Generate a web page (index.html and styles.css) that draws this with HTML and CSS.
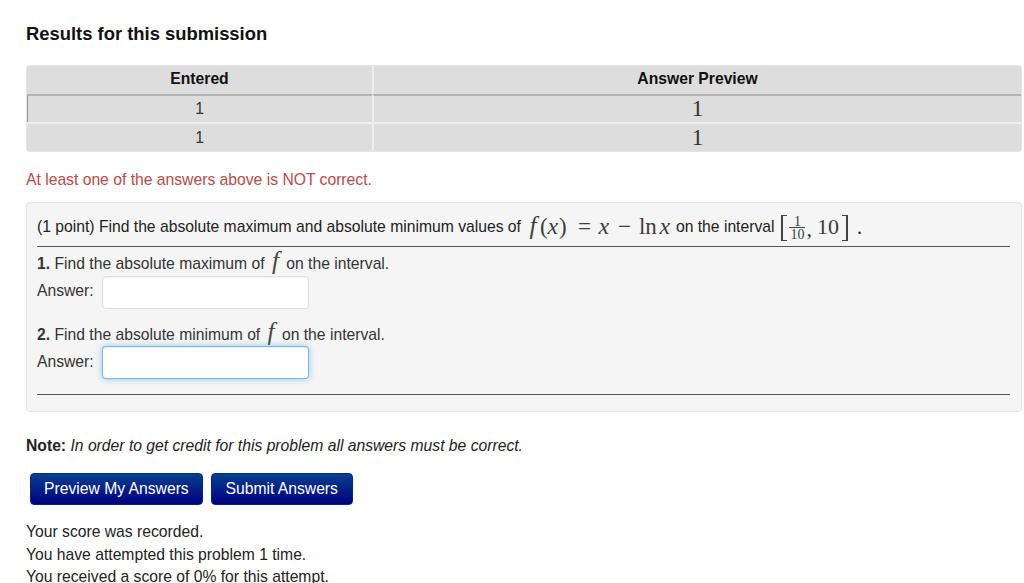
FILE: index.html
```html
<!DOCTYPE html>
<html lang="en">
<head>
<meta charset="utf-8">
<title>Results for this submission</title>
<link rel="stylesheet" href="styles.css">
</head>
<body>
<h2 class="title">Results for this submission</h2>
<table class="results">
  <thead>
    <tr><th class="col-entered">Entered</th><th>Answer Preview</th></tr>
  </thead>
  <tbody>
    <tr class="row-first"><td>1</td><td class="serif-num">1</td></tr>
    <tr class="row-second"><td>1</td><td class="serif-num">1</td></tr>
  </tbody>
</table>
<p class="warning">At least one of the answers above is NOT correct.</p>
<section class="problem">
  <div class="statement">
    <span>(1 point) Find the absolute maximum and absolute minimum values of</span>
    <span class="math"><i class="m-f">f</i><span class="m-paren">(</span><i class="m-x">x</i><span class="m-paren">)</span><span class="m-eq">=</span><i class="m-x m-x-a">x</i><span class="m-minus">−</span><span class="m-ln">ln</span><i class="m-x m-x-b">x</i></span>
    <span>on the interval</span>
    <span class="math interval"><span class="bracket bracket-l"></span><span class="frac"><span class="num">1</span><span class="den">10</span></span><span class="m-comma">,</span><span class="m-ten">10</span><span class="bracket bracket-r"></span></span>
    <span class="math-dot">.</span>
  </div>
  <div class="part part-first"><b>1.</b> Find the absolute maximum of <i class="fn-inline">f</i> on the interval.</div>
  <div class="answer answer-first"><label>Answer:</label><input class="field" type="text"></div>
  <div class="part part-second"><b>2.</b> Find the absolute minimum of <i class="fn-inline">f</i> on the interval.</div>
  <div class="answer answer-second"><label>Answer:</label><input class="field field-focus" type="text"></div>
  <hr class="rule">
</section>
<p class="note"><b>Note:</b> <i>In order to get credit for this problem all answers must be correct.</i></p>
<div class="actions">
  <button class="btn" type="button">Preview My Answers</button>
  <button class="btn btn-submit" type="button">Submit Answers</button>
</div>
<div class="score">
  <div>Your score was recorded.</div>
  <div>You have attempted this problem 1 time.</div>
  <div>You received a score of 0% for this attempt.</div>
</div>
</body>
</html>
```

FILE: styles.css
```css
* { box-sizing: border-box; }
html, body { height: 583px; overflow: hidden; }
body {
  margin: 0;
  padding: 24px 2px 0 26px;
  font-family: "Liberation Sans", Arial, sans-serif;
  font-size: 15.7px;
  line-height: 20px;
  color: #333;
  background: #fff;
}
.title {
  margin: 0 0 21px;
  font-size: 18.4px;
  line-height: 20px;
  font-weight: bold;
  color: #111;
}
.results {
  width: 100%;
  border-collapse: separate;
  border-spacing: 0;
  table-layout: fixed;
  background: #ddd;
  border: 1px solid #e4e4e4;
  border-radius: 4px;
}
.results th, .results td {
  padding: 0;
  text-align: center;
  border-left: 2px solid #eee;
  font-weight: normal;
}
.results th:first-child, .results td:first-child { border-left: 0; }
.col-entered { width: 345px; }
.results th { font-weight: bold; color: #111; height: 28px; padding-bottom: 3px; }
.results td { border-top: 2px solid #eee; }
.row-first td { height: 28px; border-top: 2px solid #b4b4b4; }
.row-second td { height: 29px; }
.row-first td:first-child { box-shadow: inset 1px 0 0 #999; }
.serif-num { font-family: "Liberation Serif", serif; font-size: 23px; }
.warning {
  margin: 18px 0 12px;
  color: #b94a48;
  line-height: 20px;
}
.problem {
  height: 210px;
  padding: 9px 11px 0 10px;
  background: #f5f5f5;
  border: 1px solid #e3e3e3;
  border-radius: 4px;
}
.statement {
  height: 35px;
  padding-bottom: 5px;
  border-bottom: 1px solid #555;
  white-space: nowrap;
  display: flex;
  align-items: center;
  gap: 5px;
  color: #222;
}
.math {
  display: inline-flex;
  align-items: baseline;
  font-family: "Liberation Serif", serif;
  font-size: 23px;
  color: #3c3c3c;
}
.m-f, .m-x, .m-paren, .m-eq, .m-minus, .m-ln { display: inline-block; text-align: center; }
.m-f { width: 14px; font-size: 25px; }
.m-paren { width: 7px; }
.m-x { width: 12px; font-size: 24px; }
.m-eq { width: 17px; margin-left: 10px; }
.m-x-a { margin-left: 5px; }
.m-minus { width: 15px; margin-left: 7px; }
.m-ln { width: 16px; margin-left: 7px; }
.m-x-b { margin-left: 4px; }
.interval { margin-left: 2px; align-items: center; font-size: 22px; }
.bracket {
  display: block;
  width: 6px;
  height: 26px;
  margin-top: 2px;
  border: 1px solid #444;
}
.bracket-l { border-left-width: 2px; border-right: 0; }
.bracket-r { margin-left: 3px; border-right-width: 2px; border-left: 0; }
.frac {
  display: inline-flex;
  flex-direction: column;
  align-items: center;
  width: 16px;
  margin-left: 2px;
  margin-top: 2px;
  font-size: 14px;
  line-height: 13px;
}
.num { width: 100%; height: 13px; text-align: center; border-bottom: 1px solid #444; }
.den { display: block; height: 13px; }
.m-comma { margin-left: 1px; margin-top: 5px; }
.m-ten { margin-left: 5px; }
.math-dot {
  margin-left: 4px;
  font-family: "Liberation Serif", serif;
  font-size: 20px;
}
.part { height: 24px; line-height: 24px; }
.part-first { margin-top: 4px; }
.part-second { margin-top: 13px; }
.fn-inline {
  display: inline-block;
  width: 13px;
  text-align: center;
  font-family: "Liberation Serif", serif;
  font-size: 25px;
  line-height: 20px;
  color: #444;
}
.answer {
  display: flex;
  align-items: center;
  gap: 8px;
  height: 33px;
}
.answer-first { margin-top: 1px; }
.answer-first label { margin-bottom: 3px; }
.answer-second label { margin-bottom: 1px; }
.field {
  width: 207px;
  height: 33px;
  padding: 4px 6px;
  background: #fff;
  border: 1px solid #ddd;
  border-radius: 4px;
  box-shadow: inset 0 1px 1px rgba(0,0,0,.04);
  outline: 0;
}
.field-focus {
  border-color: rgba(82,168,236,.8);
  box-shadow: inset 0 1px 1px rgba(0,0,0,.075), 0 0 6px rgba(82,168,236,.6);
}
.rule {
  margin: 15px 0 0;
  border: 0;
  border-top: 1px solid #555;
}
.note { margin: 24px 0 17px; color: #222; }
.actions { display: flex; gap: 8px; padding-left: 4px; }
.btn {
  height: 32px;
  padding: 0 13px;
  font: 15.7px/20px "Liberation Sans", Arial, sans-serif;
  color: #fff;
  background: linear-gradient(#08408f, #00007f);
  border: 1px solid #002a80;
  border-radius: 4px;
}
.btn-submit { width: 142px; padding: 0; }
.score { margin-top: 16px; line-height: 22.5px; color: #222; }
```
